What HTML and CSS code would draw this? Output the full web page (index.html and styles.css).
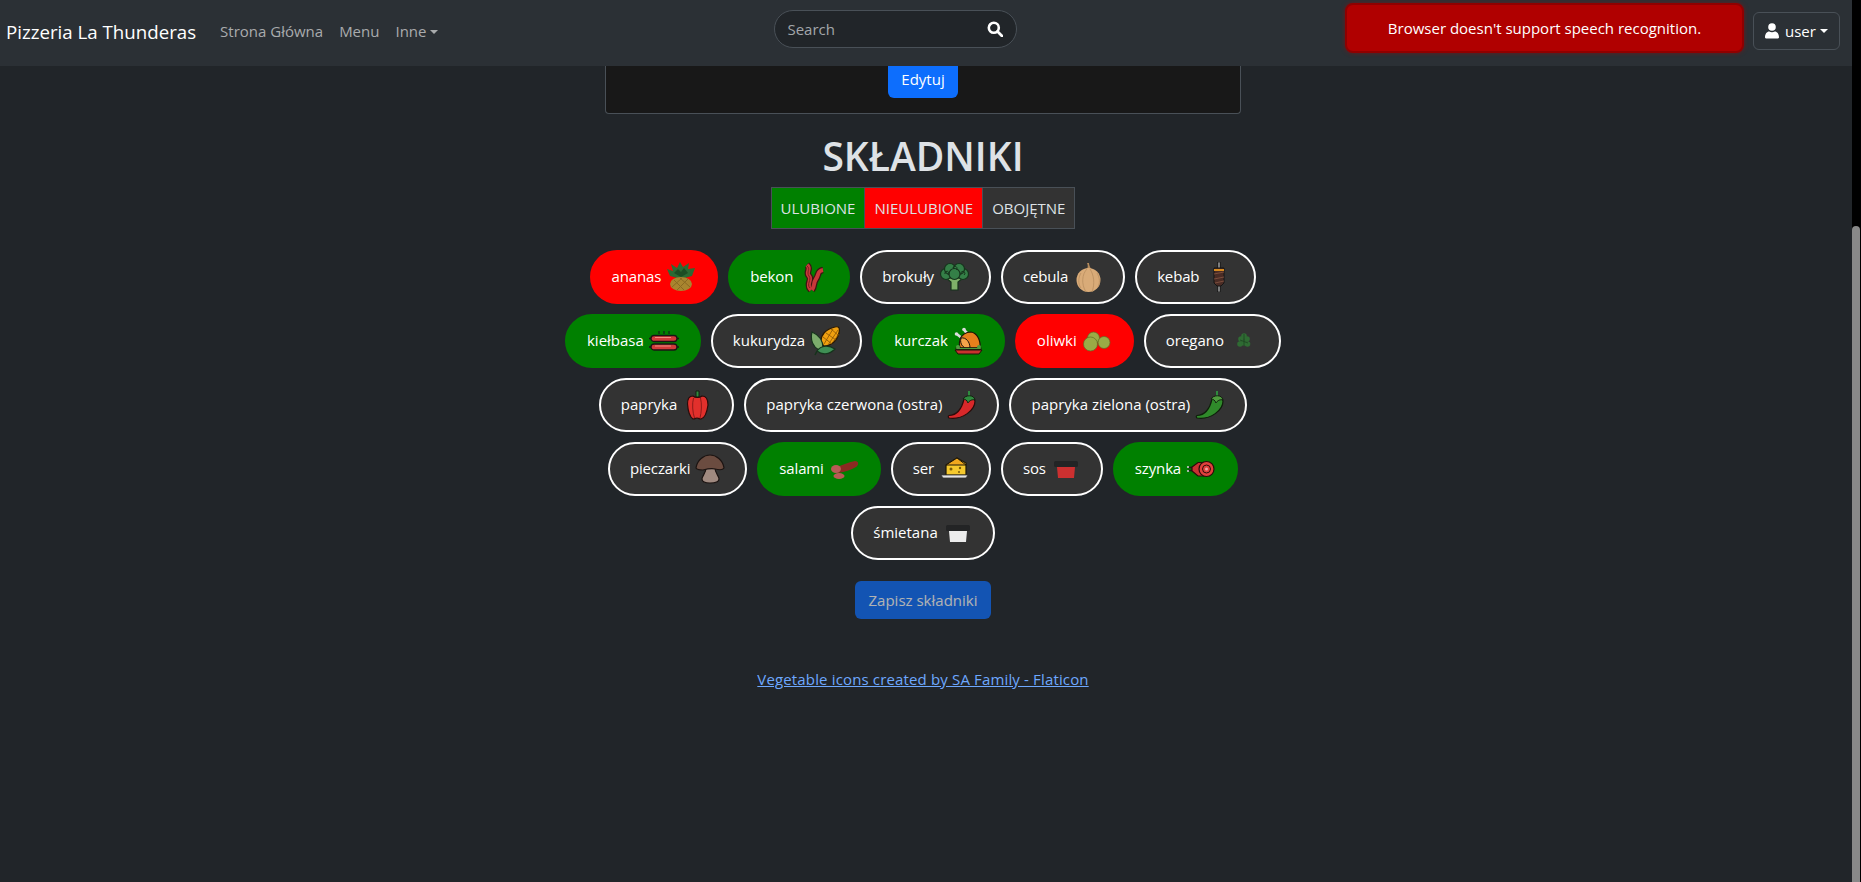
FILE: index.html
```html
<!DOCTYPE html>
<html>
<head>
  <meta charset="utf-8">
  <title>Pizzeria La Thunderas</title>
  <link rel="stylesheet" href="styles.css">
</head>

<body>
  <div class="page">
    <nav class="navbar">
      <a class="brand" href="#">Pizzeria La Thunderas</a>
      <a class="nav-link" href="#">Strona Główna</a>
      <a class="nav-link" href="#">Menu</a>
      <a class="nav-link caret" href="#">Inne</a>
      <form class="search">
        <input type="text" placeholder="Search">
        <svg width="16" height="16" viewBox="0 0 16 16"><circle cx="6.8" cy="6.8" r="5" fill="none" stroke="#fff" stroke-width="2.6"/><path d="M10.5 10.5L15 15" stroke="#fff" stroke-width="2.8" stroke-linecap="round"/></svg>
      </form>
      <div class="speech-alert">Browser doesn't support speech recognition.</div>
      <button class="user-btn caret" type="button">
        <svg width="14" height="16" viewBox="0 0 14 16"><circle cx="7" cy="4" r="3.8" fill="#fff"/><path d="M1 15.5C.4 15.5 0 15 0 14.3 0 10.800 2 8.500 4.200 8.500 5 9 6 9.300 7 9.300S9 9 9.800 8.500C12 8.500 14 10.800 14 14.300 14 15 13.600 15.500 13 15.500Z" fill="#fff"/></svg>
        user
      </button>
    </nav>

    <main class="content">
      <div class="pizza-card">
        <a class="btn-edit" href="#">Edytuj</a>
      </div>

      <h1 class="title">SKŁADNIKI</h1>

      <div class="legend">
        <span class="legend-item liked">ULUBIONE</span>
        <span class="legend-item disliked">NIEULUBIONE</span>
        <span class="legend-item">OBOJĘTNE</span>
      </div>

      <div class="ingredients">
        <div class="pill-row tight">
          <button class="pill disliked" type="button">ananas
            <svg class="icon" viewBox="0 0 30 30"><path d="M15 17L4 14 1 7 7 9 5 2 11 6 14 0 17 5 23 1 22 7 29 6 26 14Z" fill="#2c6a33"/><path d="M15 15L8 11 12 7 15 10 18 6 22 11Z" fill="#1d4d24"/><ellipse cx="15" cy="22" rx="11" ry="7" fill="#a9852f"/><path d="M8 18L18 28M14 16L24 25M22 17L11 28M16 16L6 25" stroke="#8a6a22" stroke-width="1"/></svg>
          </button>
          <button class="pill liked" type="button">bekon
            <svg class="icon" viewBox="0 0 30 30"><g fill="none" stroke="#3b1512" stroke-width="6.500"><path d="M9 3C14 7 7 10 11 14S7 22 13 28"/><path d="M25 8C19 9 21 13 18 17S17 24 14 28"/></g><g fill="none" stroke="#c8383a" stroke-width="4"><path d="M9 3C14 7 7 10 11 14S7 22 13 28"/><path d="M25 8C19 9 21 13 18 17S17 24 14 28"/></g><path d="M9 4C13 7 8 10 11 14S8 22 12 26" fill="none" stroke="#7a1f1f" stroke-width="1"/></svg>
          </button>
          <button class="pill" type="button">brokuły
            <svg class="icon" viewBox="0 0 30 30"><path d="M7 16L12 20 12 28H19L19 20 24 16Z" fill="#7fb069" stroke="#16331c" stroke-width="1.200"/><g fill="#347f47" stroke="#16331c" stroke-width="1.200"><circle cx="7" cy="12" r="5.500"/><circle cx="24" cy="12" r="5.500"/><circle cx="11" cy="7" r="5.500"/><circle cx="20" cy="7" r="5.500"/><circle cx="15.500" cy="12" r="5.500"/></g><path d="M14 6a2 2 0 1 1 3 2M6 12a2 2 0 1 1 3 1M22 12a2 2 0 1 1 3 1" fill="none" stroke="#16331c"/></svg>
          </button>
          <button class="pill" type="button">cebula
            <svg class="icon" viewBox="0 0 30 30"><path d="M14 1C15 3 15 5 14 7L18 7C17 5 16 3 16 1Z" fill="#b48a5c"/><circle cx="15.500" cy="18" r="12" fill="#d9ab78"/><path d="M14 7C9 12 8 22 13 30M17 7C21 13 22 22 19 30M8 11C5 16 5 22 8 26M24 11C27 16 27 21 25 25" fill="none" stroke="#b98e60" stroke-width=".8"/></svg>
          </button>
          <button class="pill" type="button">kebab
            <svg class="icon" viewBox="0 0 30 30"><rect x="13.500" y="0" width="3" height="30" fill="#7d7d7d" stroke="#151515" stroke-width=".8"/><path d="M10 6H20L20 21 17 24H13L10 21Z" fill="#4a2c25" stroke="#151515"/><path d="M10 12L20 10M10 17L20 15M11 21L20 19" stroke="#7b4d3c"/><rect x="10" y="7" width="10" height="2" fill="#d68a1f"/></svg>
          </button>
        </div>

        <div class="pill-row">
          <button class="pill liked" type="button">kiełbasa
            <svg class="icon" viewBox="0 0 30 30"><path d="M10 5V8M15 5V8M20 5V8" stroke="#16241a" stroke-width="1.300"/><g fill="#d23a3a" stroke="#1b1414" stroke-width="1.300"><rect x="2" y="9.500" width="26" height="6" rx="3"/><rect x="2" y="18" width="26" height="6" rx="3"/></g><path d="M0 12.500H2M28 12.500H30M0 21H2M28 21H30" stroke="#1b1414" stroke-width="1.400"/><path d="M6 11.500H22M6 20H22" stroke="#f08a80"/></svg>
          </button>
          <button class="pill" type="button">kukurydza
            <svg class="icon" viewBox="0 0 30 30"><path d="M11 17C10 9 16 3 25 1 29 0 30 2 29 7 27 15 21 20 14 20Z" fill="#f0a010" stroke="#2a1a05" stroke-width="1.200"/><path d="M13 11L22 18M16 7L26 14M21 3L28 9M14 18L23 3M18 19L28 4M23 16L29 8" stroke="#8a5505" stroke-width=".8"/><path d="M9 24C3 21 0 14 2 6 9 9 13 14 13 22Z" fill="#7cac6c" stroke="#16331c" stroke-width="1.200"/><path d="M7 25C11 19 19 19 25 23 19 29 12 29 7 25Z" fill="#3f8f55" stroke="#16331c" stroke-width="1.200"/><path d="M7 25L5 29" stroke="#16331c" stroke-width="1.500"/></svg>
          </button>
          <button class="pill liked" type="button">kurczak
            <svg class="icon" viewBox="0 0 30 30"><path d="M10 13L5 9M16 9L12 5" stroke="#dcdcdc" stroke-width="2.600" stroke-linecap="round"/><circle cx="3.500" cy="8" r="1.800" fill="#dcdcdc"/><circle cx="11" cy="3.500" r="1.800" fill="#dcdcdc"/><path d="M7 14C8 9 13 6 18 6 24 7 28 14 27 23H8C6 20 6 17 7 14Z" fill="#e8801c" stroke="#1e1208" stroke-width="1.200"/><path d="M8 12C13 11 17 16 17 22 12 24 6 19 8 12Z" fill="#f5a44a" stroke="#1e1208"/><path d="M3 21.500H28V23.500H3Z" fill="#4f9a3e" stroke="#1e1208" stroke-width=".8"/><circle cx="5" cy="21" r="2" fill="#4f9a3e"/><circle cx="26" cy="21" r="2" fill="#4f9a3e"/><path d="M2 24H29L26 28H5Z" fill="#c8322e" stroke="#1e1208"/></svg>
          </button>
          <button class="pill disliked" type="button">oliwki
            <svg class="icon" viewBox="0 0 30 30"><g fill="#9aab46" stroke="#5f6c24" stroke-width=".7"><circle cx="11.500" cy="12" r="6"/><circle cx="8.500" cy="18" r="7"/><circle cx="22" cy="16.500" r="6"/></g></svg>
          </button>
          <button class="pill" type="button">oregano
            <svg class="icon" viewBox="0 0 30 30"><g fill="#2f6b33"><circle cx="15" cy="10" r="2.800"/><circle cx="12" cy="13" r="2.800"/><circle cx="18" cy="13" r="2.800"/><circle cx="11" cy="18" r="2.800"/><circle cx="15" cy="17" r="2.800"/><circle cx="18.500" cy="18" r="2.800"/></g><path d="M15 8V20M11 14L19 17" stroke="#1d4421" stroke-width=".8"/></svg>
          </button>
        </div>

        <div class="pill-row">
          <button class="pill" type="button">papryka
            <svg class="icon" viewBox="0 0 30 30"><path d="M14 7V1H17V7Z" fill="#2f8a3e" stroke="#12200f"/><path d="M11 6C13 8 18 8 20 6 24 6 26 10 26 15 25 22 23 28 19 29 17 29 16 28 15 28S13 29 11 29C8 27 6 21 5.500 14 5.500 9 7 6 11 6Z" fill="#e2302c" stroke="#2a0c0a" stroke-width="1.200"/><path d="M11.500 8C10 14 10.500 22 12.500 28M18.500 8C20 14 19.500 22 18 28" fill="none" stroke="#8d1a18"/></svg>
          </button>
          <button class="pill" type="button">papryka czerwona (ostra)
            <svg class="icon" viewBox="0 0 30 30"><path d="M22 7V1" stroke="#2f8a3e" stroke-width="2"/><path d="M17 9C20 5 27 6 28 11 28 20 16 30 2 28 1 27 1 26 2 25.500 10 25 15 18 17 9Z" fill="#d8282a" stroke="#2a0c0a" stroke-width="1.200"/><path d="M16 9C18 5 27 4 28 10 25 9 22 11 21 13 20 10 18 9 16 9Z" fill="#2f8a3e" stroke="#12200f"/></svg>
          </button>
          <button class="pill" type="button">papryka zielona (ostra)
            <svg class="icon" viewBox="0 0 30 30"><path d="M22 7V1" stroke="#2f8a3e" stroke-width="2"/><path d="M17 9C20 5 27 6 28 11 28 20 16 30 2 28 1 27 1 26 2 25.500 10 25 15 18 17 9Z" fill="#2f8a2a" stroke="#0f1e0b" stroke-width="1.200"/><path d="M16 9C18 5 27 4 28 10 25 9 22 11 21 13 20 10 18 9 16 9Z" fill="#4f9a3e" stroke="#12200f"/></svg>
          </button>
        </div>

        <div class="pill-row tight">
          <button class="pill" type="button">pieczarki
            <svg class="icon" viewBox="0 0 30 30"><path d="M11 14C11 19 7 22 7 25 7 29 12 29 15 29S24 29 24 25C24 22 20 19 20 14Z" fill="#a08a80" stroke="#1c1412" stroke-width="1.200"/><path d="M1 14C2 6 9 1 15 1S28 6 29 14C28 16 24 16 20 15 16 14 12 15 8 16 4 16 2 16 1 14Z" fill="#6b4c40" stroke="#1c1412" stroke-width="1.200"/></svg>
          </button>
          <button class="pill liked" type="button">salami
            <svg class="icon" viewBox="0 0 30 30"><path d="M6 13C13 12 19 8 26 7 30 7 30 11 27 13 22 16 16 18 9 19Z" fill="#8b2a22"/><ellipse cx="7" cy="15" rx="5" ry="4" fill="#b85a56"/><ellipse cx="10" cy="22" rx="5.500" ry="3" fill="#b85a56"/></svg>
          </button>
          <button class="pill" type="button">ser
            <svg class="icon" viewBox="0 0 30 30"><path d="M7 11L18 4 27 9V21H7Z" fill="#f5c92e" stroke="#1c1608" stroke-width="1.200"/><path d="M7 11H27L18 4Z" fill="#f0a81e" stroke="#1c1608"/><circle cx="12" cy="15" r="1.500" fill="#7a5a08"/><circle cx="21" cy="14" r="1.200" fill="#7a5a08"/><circle cx="20" cy="18" r="1" fill="#7a5a08"/><path d="M2 21H29L27 24H4Z" fill="#e4e4e4" stroke="#333" stroke-width=".8"/></svg>
          </button>
          <button class="pill" type="button">sos
            <svg class="icon" viewBox="0 0 30 30"><rect x="3" y="7" width="24" height="6" rx="1.500" fill="#232425"/><path d="M6 13H24L23 24H7Z" fill="#cc3030"/></svg>
          </button>
          <button class="pill liked" type="button">szynka
            <svg class="icon" viewBox="0 0 30 30"><path d="M2 13.500H6M2 16.500H6" stroke="#1a1a1a" stroke-width="1.400"/><circle cx="2" cy="13" r="1.100" fill="#ccc"/><circle cx="2" cy="17" r="1.100" fill="#ccc"/><path d="M6 13L12 8.500H20V22H12L6 17Z" fill="#c83232" stroke="#2a0c0a" stroke-width="1.200"/><circle cx="20.500" cy="15" r="7.500" fill="#e0403c" stroke="#2a0c0a" stroke-width="1.200"/><circle cx="20.500" cy="15" r="4" fill="none" stroke="#2a0c0a"/><circle cx="20.500" cy="15" r="1.500" fill="#f0a0a0"/></svg>
          </button>
        </div>

        <div class="pill-row">
          <button class="pill" type="button">śmietana
            <svg class="icon" viewBox="0 0 30 30"><rect x="3" y="7" width="24" height="6" rx="1.500" fill="#232425"/><path d="M6 13H24L23 24H7Z" fill="#ececec"/></svg>
          </button>
        </div>
      </div>

      <button class="btn-save" type="button" disabled>Zapisz składniki</button>

      <a class="credits" href="#">Vegetable icons created by SA Family - Flaticon</a>
    </main>
  </div>

  <div class="scrollbar"><div class="scrollbar-thumb"></div></div>
</body>
</html>
```

FILE: styles.css
```css
* {
  box-sizing: border-box;
}

body {
  display: flex;
  height: 100vh;
  margin: 0;
  overflow: hidden;
  background: #000;
  color: #dee2e6;
  font-family: "Open Sans", sans-serif;
  font-size: 15px;
}

a {
  text-decoration: none;
}

.page {
  flex: 1;
  min-width: 0;
  background: #212529;
}

.scrollbar {
  width: 9px;
  padding: 226px 1px 0 0;
}

.scrollbar-thumb {
  height: 100%;
  background: #888;
  border-radius: 4px 4px 0 0;
}

/* navbar */
.navbar {
  display: flex;
  align-items: center;
  height: 66px;
  padding: 0 12px 4px 6px;
  background: #2b3035;
}

.brand {
  margin-right: 24px;
  color: #fff;
  font-size: 18.7px;
}

.nav-link {
  margin-right: 16px;
  color: #a9abad;
}

.caret::after {
  content: "";
  display: inline-block;
  margin-left: 4px;
  vertical-align: 3px;
  border-top: 4.500px solid;
  border-right: 4.500px solid transparent;
  border-left: 4.500px solid transparent;
}

.search {
  display: flex;
  align-items: center;
  width: 243px;
  height: 38px;
  margin-left: 320px;
  margin-top: -4px;
  padding: 0 13px 0 12px;
  background: #212529;
  border: 1px solid #495057;
  border-radius: 19px;
}

.search input {
  flex: 1;
  min-width: 0;
  padding: 0;
  border: none;
  outline: none;
  background: transparent;
  color: #dee2e6;
  font: inherit;
}

.search input::placeholder {
  color: #a3a7ab;
}

.speech-alert {
  display: flex;
  align-items: center;
  justify-content: center;
  width: 399px;
  height: 50px;
  margin-left: auto;
  margin-right: 9px;
  margin-top: -6px;
  background: #b00000;
  border: 2px solid #8f0000;
  border-radius: 8px;
  box-shadow: 0 0 4px rgba(176, 0, 0, 0.5);
  color: #fff;
}

.user-btn {
  display: flex;
  align-items: center;
  height: 38px;
  width: 87px;
  padding: 0 11px;
  background: transparent;
  border: 1px solid #495057;
  border-radius: 6px;
  color: #fff;
  font: inherit;
}

.user-btn svg {
  margin-right: 6px;
}

/* main part */
.content {
  display: flex;
  flex-direction: column;
  align-items: center;
  padding-right: 6px;
}

.pizza-card {
  display: flex;
  justify-content: center;
  width: 636px;
  height: 48px;
  background: #181818;
  border: 1px solid #495057;
  border-top: none;
  border-radius: 0 0 4px 4px;
}

.btn-edit {
  width: 70px;
  height: 32px;
  padding-top: 3px;
  background: #0d6efd;
  border-radius: 0 0 6px 6px;
  color: #fff;
  text-align: center;
}

.title {
  margin: 18px 0 7px;
  color: #dee2e6;
  font-size: 39px;
  font-weight: 600;
  line-height: 48px;
}

.legend {
  display: flex;
  height: 42px;
  border: 1px solid #495057;
}

.legend-item {
  display: flex;
  align-items: center;
  padding: 0 9px;
  background: #333;
}

.legend-item + .legend-item {
  border-left: 1px solid #495057;
}

.legend-item.liked {
  background: #008000;
}

.legend-item.disliked {
  background: #f00;
}

.ingredients {
  display: flex;
  flex-direction: column;
  gap: 10px;
  margin-top: 21px;
}

.pill-row {
  display: flex;
  justify-content: center;
  gap: 10px;
}

.pill-row.tight {
  letter-spacing: -0.15px;
}

.pill {
  display: flex;
  align-items: center;
  gap: 5px;
  height: 54px;
  padding: 0 20px 2px;
  background: #333;
  border: 2px solid #fff;
  border-radius: 27px;
  color: #fff;
  font: inherit;
  letter-spacing: inherit;
  cursor: pointer;
}

.pill.liked {
  background: #008000;
  border-color: #008000;
}

.pill.disliked {
  background: #f00;
  border-color: #f00;
}

.icon {
  width: 30px;
  height: 30px;
  flex: none;
  margin-bottom: -2px;
}

.btn-save {
  width: 136px;
  height: 38px;
  margin-top: 21px;
  background: #0d6efd;
  border: none;
  border-radius: 6px;
  color: #fff;
  font: inherit;
  opacity: 0.65;
}

.credits {
  margin-top: 50px;
  color: #6ea8fe;
  letter-spacing: 0.15px;
  text-decoration: underline;
}
```
